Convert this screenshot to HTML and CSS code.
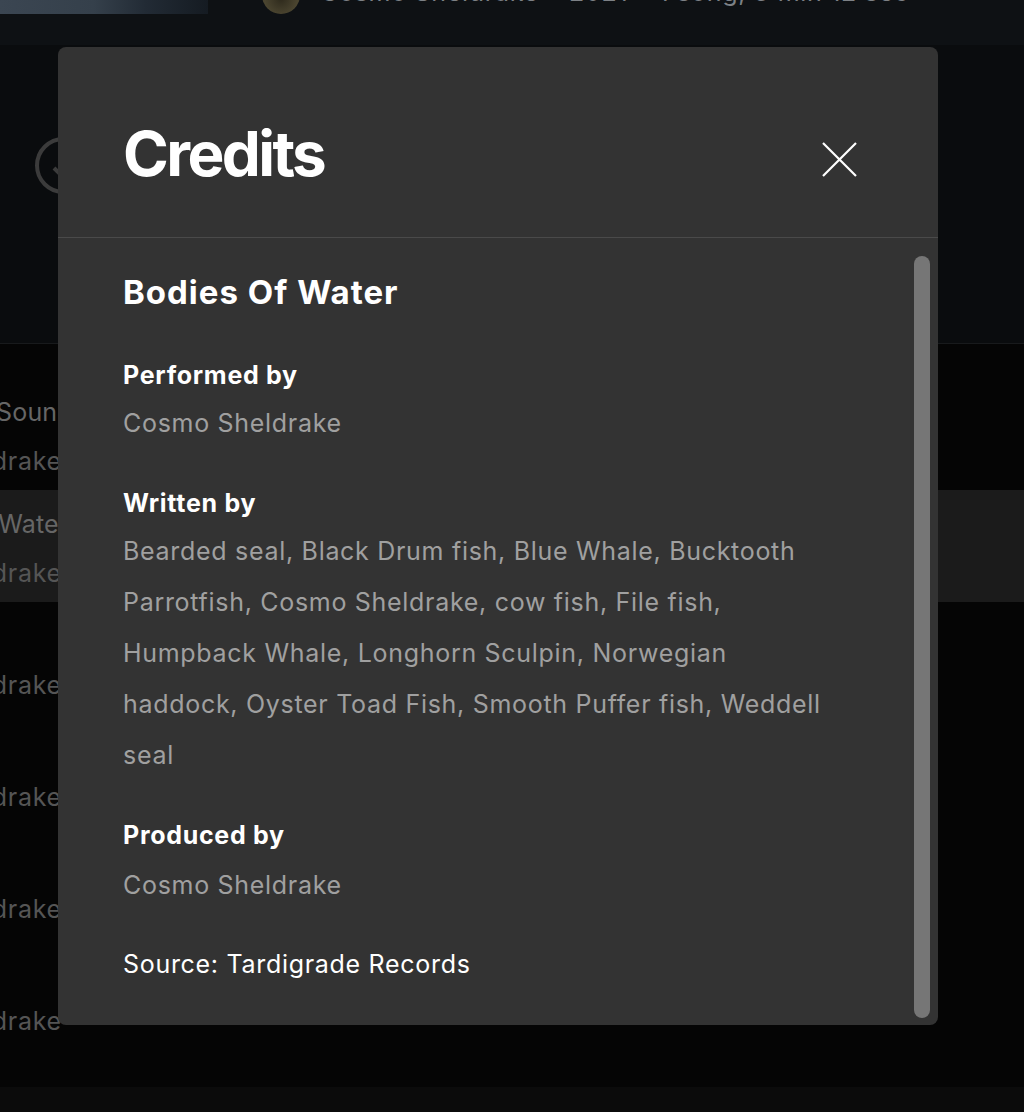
FILE: index.html
```html
<!DOCTYPE html>
<html lang="en">
<head>
<meta charset="utf-8">
<title>Credits</title>
<link rel="stylesheet" href="styles.css">
</head>
<body>
<div class="page">
  <header class="hero">
    <div class="cover"></div>
    <div class="avatar-clip"><div class="avatar"></div></div>
    <p class="meta">Cosmo Sheldrake • 2021 • 1 song, 3 min 12 sec</p>
  </header>
  <section class="actions">
    <svg class="download" width="57" height="57" viewBox="0 0 57 57" aria-hidden="true">
      <circle cx="28.5" cy="28.5" r="26.5" fill="none" stroke="#3b3b3b" stroke-width="4"/>
      <path d="M28.5 14v26M19 31l9.5 9.5L38 31" fill="none" stroke="#3b3b3b" stroke-width="4"/>
    </svg>
  </section>
  <div class="tracks">
    <div class="track">
      <div class="track-info">
        <span class="track-title">Ocean Floor Sounds</span>
        <span class="track-artist">Cosmo Sheldrake</span>
      </div>
    </div>
    <div class="track track-active">
      <div class="track-info">
        <span class="track-title">Deep Ocean Water</span>
        <span class="track-artist">Cosmo Sheldrake</span>
      </div>
    </div>
    <div class="track">
      <div class="track-info">
        <span class="track-title">Pelicans</span>
        <span class="track-artist">Cosmo Sheldrake</span>
      </div>
    </div>
    <div class="track">
      <div class="track-info">
        <span class="track-title">Wake Up</span>
        <span class="track-artist">Cosmo Sheldrake</span>
      </div>
    </div>
    <div class="track">
      <div class="track-info">
        <span class="track-title">Birds</span>
        <span class="track-artist">Cosmo Sheldrake</span>
      </div>
    </div>
    <div class="track">
      <div class="track-info">
        <span class="track-title">Rain</span>
        <span class="track-artist">Cosmo Sheldrake</span>
      </div>
    </div>
  </div>
  <footer class="player"></footer>
</div>

<div class="modal" role="dialog" aria-label="Credits">
  <div class="modal-head">
    <h1 class="modal-title">Credits</h1>
    <button class="close" aria-label="Close">
      <svg width="35" height="35" viewBox="0 0 35 35" aria-hidden="true">
        <path d="M1 1L34 34M34 1L1 34" stroke="#ffffff" stroke-width="2.2" fill="none"/>
      </svg>
    </button>
  </div>
  <div class="modal-body">
    <div class="credits">
      <h2 class="song">Bodies Of Water</h2>
      <div class="group">
        <h3 class="role">Performed by</h3>
        <p class="names">Cosmo Sheldrake</p>
      </div>
      <div class="group">
        <h3 class="role">Written by</h3>
        <p class="names">Bearded seal, Black Drum fish, Blue Whale, Bucktooth Parrotfish, Cosmo Sheldrake, cow fish, File fish, Humpback Whale, Longhorn Sculpin, Norwegian haddock, Oyster Toad Fish, Smooth Puffer fish, Weddell seal</p>
      </div>
      <div class="group group-last">
        <h3 class="role">Produced by</h3>
        <p class="names">Cosmo Sheldrake</p>
      </div>
      <p class="source">Source: Tardigrade Records</p>
    </div>
    <div class="scrollbar"><div class="thumb"></div></div>
  </div>
</div>
</body>
</html>
```

FILE: styles.css
```css
html, body {
  margin: 0;
  padding: 0;
}

body {
  width: 1024px;
  height: 1112px;
  overflow: hidden;
  background: #050505;
  font-family: "Inter", "Lato", "Noto Sans", sans-serif;
  position: relative;
}

.page {
  display: flex;
  flex-direction: column;
  height: 1112px;
}

.hero {
  height: 14px;
  display: flex;
  align-items: flex-start;
  overflow: hidden;
  background: #0e1114;
}

.cover {
  width: 208px;
  height: 14px;
  flex: none;
  background: linear-gradient(90deg, #3b4652 0%, #35404b 45%, #222b35 70%, #151b22 100%);
}

.avatar-clip {
  margin-left: 54px;
  width: 38px;
  height: 14px;
  overflow: hidden;
  flex: none;
}

.avatar {
  width: 38px;
  height: 38px;
  margin-top: -24px;
  border-radius: 50%;
  background: radial-gradient(circle at 50% 60%, #2e2a1c 0%, #4b4530 55%, #3a3624 100%);
}

.meta {
  margin: -22px 0 0 20px;
  font-size: 25px;
  line-height: 28px;
  letter-spacing: 0.7px;
  color: #7d8186;
  white-space: nowrap;
}

.actions {
  height: 330px;
  box-sizing: border-box;
  border-bottom: 1px solid #181a1c;
  background: linear-gradient(#0e1114 0, #0e1114 31px, #0a0c0e 31px, #0a0c0e 100%);
  padding: 123px 0 0 35px;
}

.download {
  display: block;
}

.tracks {
  height: 743px;
  padding-top: 34px;
  box-sizing: border-box;
  overflow: hidden;
  display: flex;
  flex-direction: column;
}

.track {
  height: 112px;
  flex: none;
  box-sizing: border-box;
  padding-top: 20px;
}

.track-active {
  background: #1b1b1b;
}

.track-info {
  display: flex;
  flex-direction: column;
  gap: 21px;
  margin-left: -157px;
  font-size: 25px;
  line-height: 28px;
  letter-spacing: 0.7px;
  white-space: nowrap;
}

.track-title {
  color: #666666;
  letter-spacing: 0.15px;
}

.track-artist {
  color: #555555;
}

.player {
  flex: 1;
  background: #0b0b0b;
}

/* Modal */
.modal {
  position: absolute;
  top: 47px;
  left: 58px;
  width: 880px;
  height: 978px;
  background: #333333;
  border-radius: 8px;
  display: flex;
  flex-direction: column;
  overflow: hidden;
  color: #ffffff;
}

.modal-head {
  display: flex;
  justify-content: space-between;
  align-items: flex-start;
  padding: 70px 81px 46px 65px;
  border-bottom: 1px solid #4a4a4a;
  flex: none;
}

.modal-title {
  margin: 0;
  font-size: 62px;
  line-height: 74px;
  font-weight: 700;
  letter-spacing: -2.6px;
}

.close {
  margin-top: 25px;
  padding: 0;
  border: 0;
  background: none;
  width: 35px;
  height: 35px;
  display: block;
}

.close svg {
  display: block;
}

.modal-body {
  flex: 1;
  min-height: 0;
  display: flex;
}

.credits {
  flex: 1;
  min-width: 0;
  padding: 34px 82px 0 65px;
  overflow: hidden;
}

.song {
  margin: 0 0 40px;
  font-size: 33px;
  line-height: 40px;
  font-weight: 700;
  letter-spacing: 1px;
}

.group {
  margin-bottom: 31px;
}

.group-last .names {
  margin-top: 2px;
}

.role {
  margin: 0;
  font-size: 25px;
  line-height: 46px;
  font-weight: 700;
  letter-spacing: 0.7px;
}

.names {
  margin: 0;
  font-size: 25px;
  line-height: 51px;
  letter-spacing: 0.7px;
  color: #a0a0a0;
}

.source {
  margin: -3px 0 0;
  font-size: 25px;
  line-height: 51px;
  letter-spacing: 0.7px;
  color: #ffffff;
}

.scrollbar {
  width: 16px;
  flex: none;
  margin: 18px 8px 7px 0;
  display: flex;
}

.thumb {
  flex: 1;
  background: #767676;
  border-radius: 8px;
}
```
